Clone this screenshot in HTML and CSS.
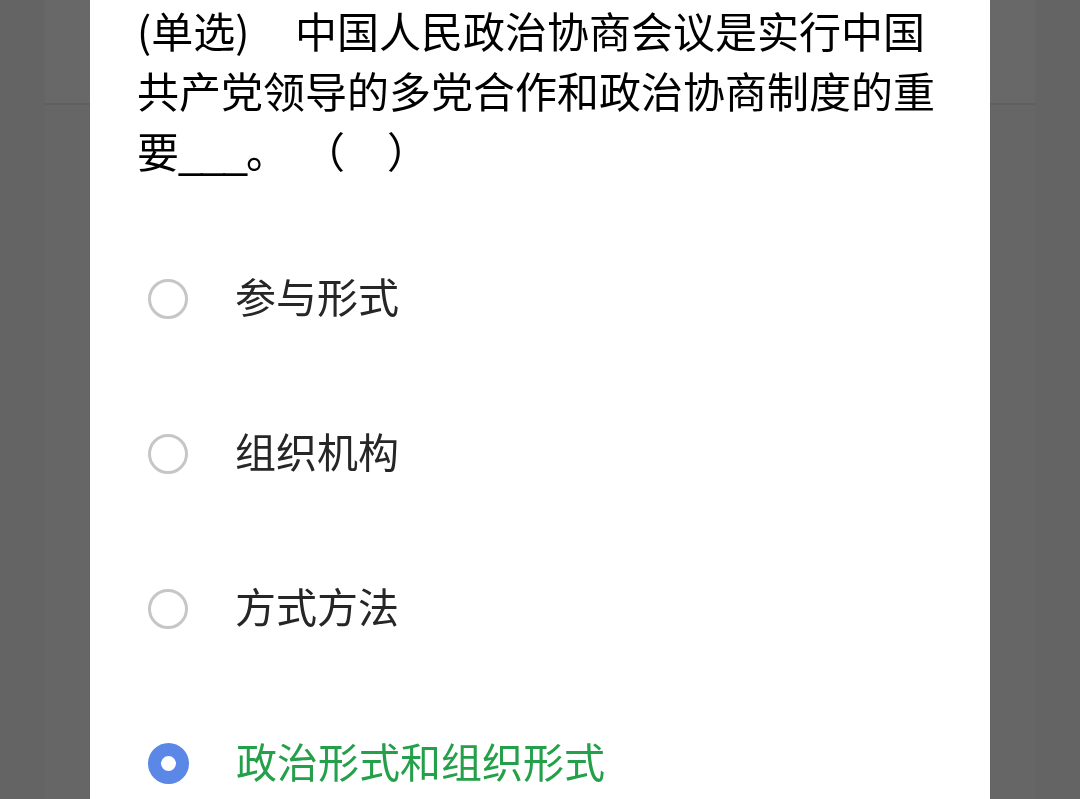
FILE: index.html
```html
<!DOCTYPE html>
<html lang="zh-CN">
<head>
<meta charset="utf-8">
<title>单选题</title>
<link rel="stylesheet" href="styles.css">
</head>
<body>
<div class="backdrop">
  <div class="page">
    <div class="page-header"></div>
  </div>
</div>
<div class="sheet">
  <p class="question"><span class="tag">(单选)</span>中国人民政治协商会议是实行中国共产党领导的多党合作和政治协商制度的重要<span class="blank">___</span>。<span class="paren">（　）</span></p>
  <ul class="options">
    <li class="option"><span class="radio"></span><span class="label">参与形式</span></li>
    <li class="option"><span class="radio"></span><span class="label">组织机构</span></li>
    <li class="option"><span class="radio"></span><span class="label">方式方法</span></li>
    <li class="option selected"><span class="radio"></span><span class="label">政治形式和组织形式</span></li>
  </ul>
</div>
</body>
</html>
```

FILE: styles.css
```css
html, body {
  margin: 0;
  padding: 0;
  height: 100%;
  overflow: hidden;
}
body {
  background: #646464;
  font-family: "Noto Sans CJK SC", "Noto Sans", sans-serif;
}
.backdrop {
  height: 100%;
  padding: 0 45px;
  box-sizing: border-box;
}
.page {
  height: 100%;
  background: #666666;
}
.page-header {
  height: 103px;
  border-bottom: 2px solid #5f5f5f;
  background: #686868;
}
.sheet {
  position: fixed;
  top: 0;
  bottom: 0;
  left: 90px;
  width: 900px;
  background: #ffffff;
  padding: 0 47px;
  box-sizing: border-box;
}
.question {
  margin: 0;
  font-size: 42px;
  line-height: 60px;
  font-weight: 400;
  color: #000000;
}
.tag {
  display: inline-block;
  width: 158px;
}
.blank {
  font-family: "Liberation Sans", sans-serif;
  letter-spacing: -1px;
}
.paren {
  margin-left: 36px;
}
.options {
  list-style: none;
  margin: 33px 0 0;
  padding: 0;
}
.option {
  height: 155px;
  display: flex;
  align-items: center;
}
.radio {
  width: 34px;
  height: 34px;
  border: 3px solid #c6c6c6;
  border-radius: 50%;
  margin-left: 11px;
  margin-right: 47px;
  flex: none;
  position: relative;
  top: 4px;
}
.label {
  font-size: 41px;
  font-weight: 400;
  color: #262626;
}
.selected .radio {
  width: 15px;
  height: 15px;
  border: 13px solid #5b87e6;
}
.selected .label {
  color: #25a04a;
}
```
